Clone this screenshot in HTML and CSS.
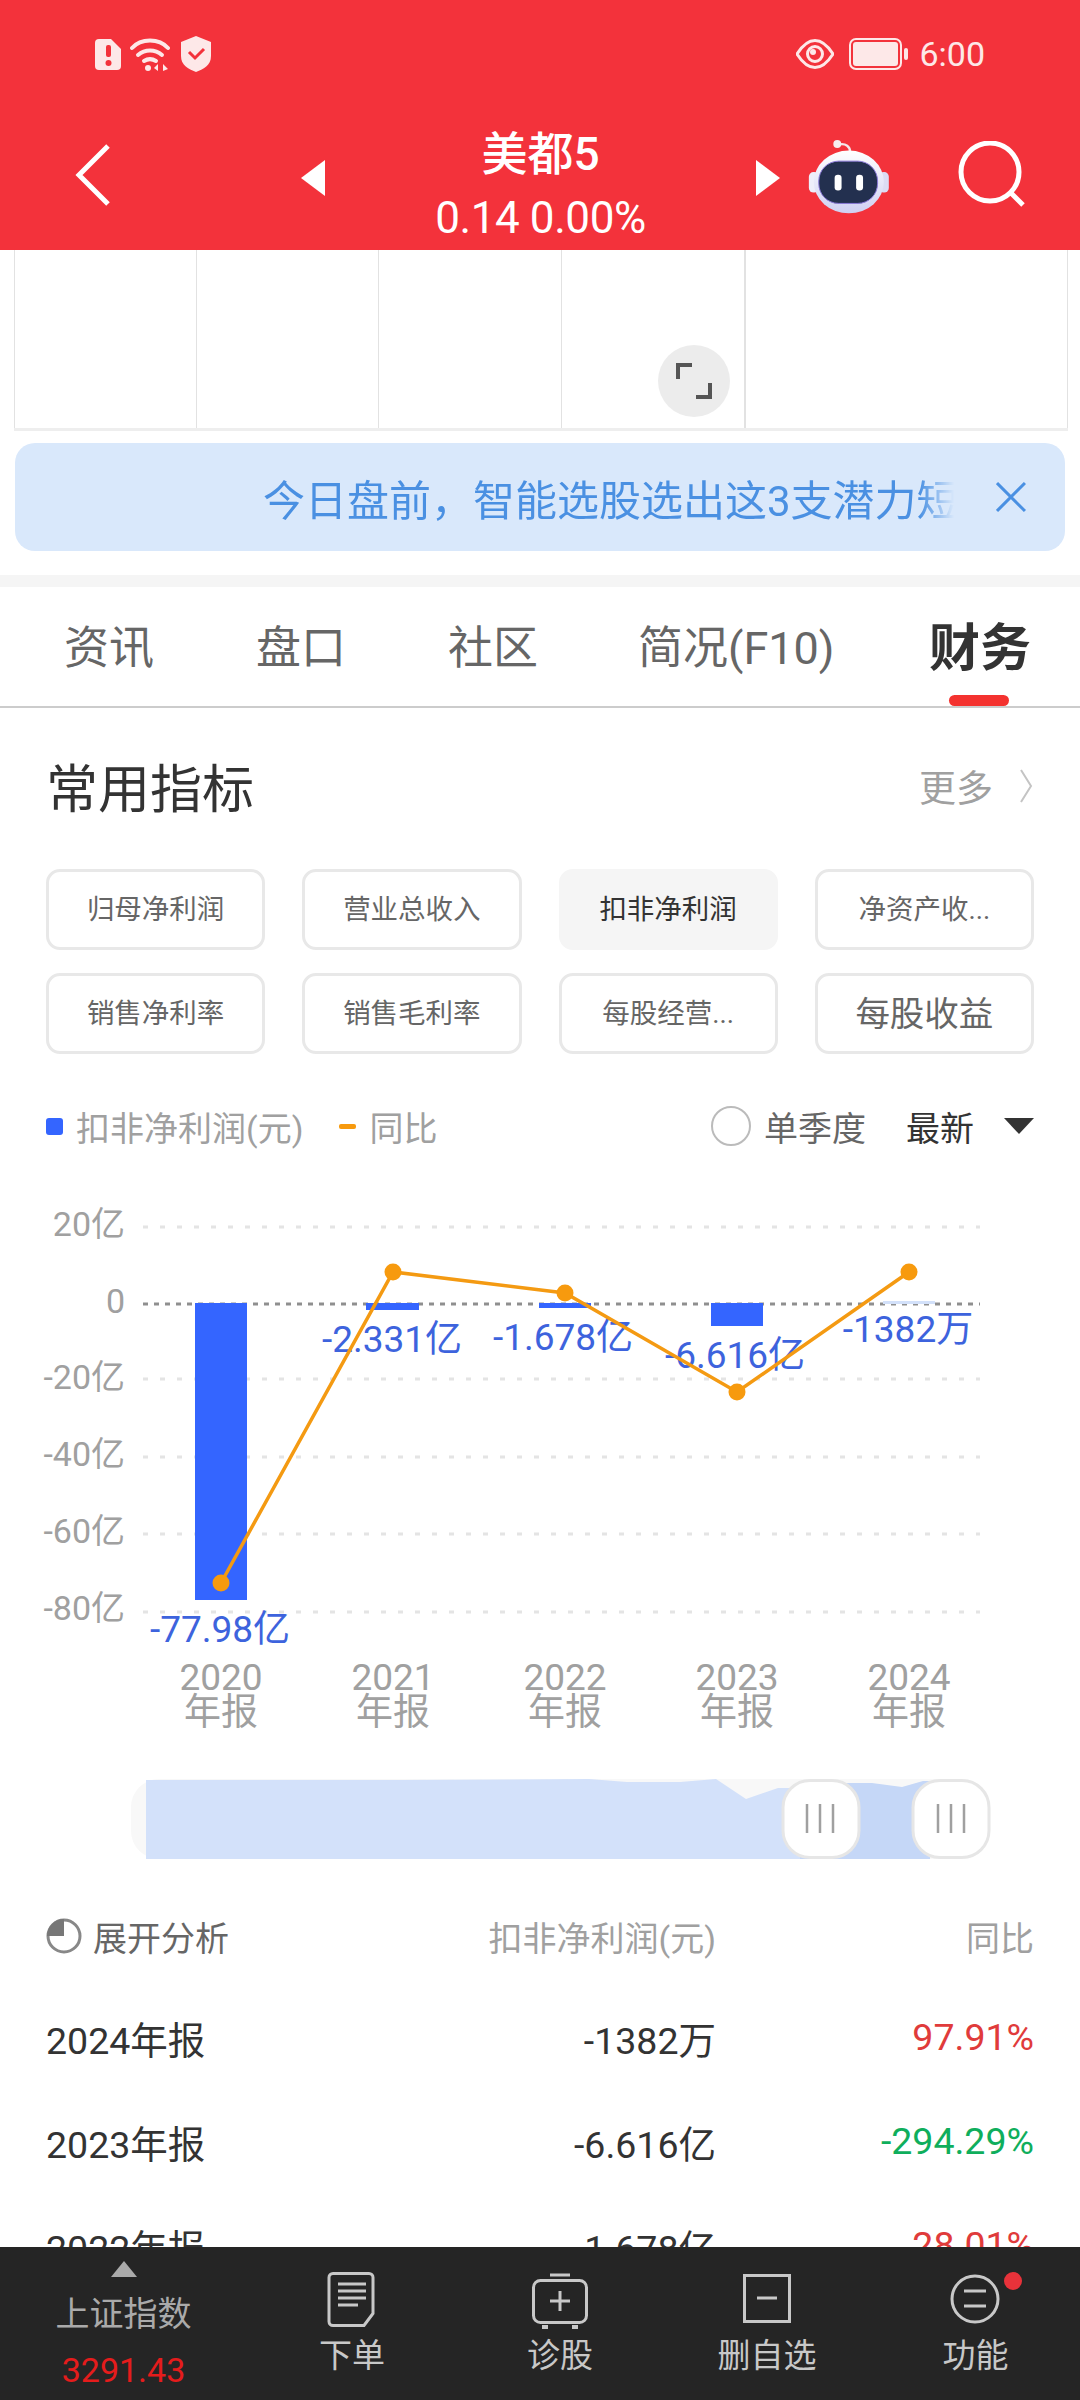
FILE: index.html
```html
<!DOCTYPE html>
<html lang="zh-CN">
<head>
<meta charset="utf-8">
<title>美都5</title>
<link rel="stylesheet" href="styles.css">
</head>
<body>
<div class="phone">
  <header class="header">
    <div class="status">
      <div class="status-left">
        <svg class="ic-sim" viewBox="0 0 26 31"><path d="M4 0h12l10 10v17a4 4 0 0 1-4 4H4a4 4 0 0 1-4-4V4a4 4 0 0 1 4-4z" fill="#fde8e8"/><rect x="11" y="6" width="5" height="12" rx="2" fill="#f3323b"/><circle cx="13.500" cy="24" r="3" fill="#f3323b"/></svg>
        <svg class="ic-wifi" viewBox="0 0 40 34"><g fill="none" stroke="#fde8e8" stroke-width="4" stroke-linecap="round"><path d="M2 11C11 1 29 1 38 11"/><path d="M8 18c7-6 17-6 24 0"/><path d="M14 24c4-2.500 8-2.500 12 0"/></g><circle cx="18" cy="31" r="3" fill="#fde8e8"/><path d="M24 31l4-4v7zM33 27l5 5-5 2z" fill="#fde8e8"/></svg>
        <svg class="ic-shield" viewBox="0 0 30 36"><path d="M15 0l15 6v14c0 9-7 13-15 16C7 33 0 29 0 20V6z" fill="#fde8e8"/><path d="M8 16l6 6 9-9" fill="none" stroke="#f3323b" stroke-width="3"/></svg>
      </div>
      <div class="status-right">
        <svg class="ic-eye" viewBox="0 0 38 30"><path d="M1 15C8 4 14 1.500 19 1.500S30 4 37 15c-7 11-13 13.500-18 13.500S8 26 1 15z" fill="none" stroke="#fde8e8" stroke-width="3"/><circle cx="19" cy="15" r="7.500" fill="none" stroke="#fde8e8" stroke-width="3"/><circle cx="17" cy="13" r="3" fill="#fde8e8"/></svg>
        <svg class="ic-batt" viewBox="0 0 60 32"><rect x="1" y="1" width="51" height="30" rx="6" fill="none" stroke="#fde8e8" stroke-width="2"/><rect x="4" y="4" width="45" height="24" rx="3" fill="#fde8e8"/><rect x="55" y="10" width="4" height="12" rx="2" fill="#fde8e8"/></svg>
        <span class="clock">6:00</span>
      </div>
    </div>
    <div class="nav">
      <svg class="ic-back" viewBox="0 0 36 62"><path d="M33 2L4 31l29 29" fill="none" stroke="#fff" stroke-width="5"/></svg>
      <svg class="ic-prev" viewBox="0 0 24 36"><path d="M24 0v36L0 18z" fill="#fff"/></svg>
      <div class="stock">
        <div class="stock-name">美都5</div>
        <div class="stock-price">0.14 0.00%</div>
      </div>
      <svg class="ic-next" viewBox="0 0 24 36"><path d="M0 0v36l24-18z" fill="#fff"/></svg>
      <svg class="ic-robot" viewBox="80 55 250 230">
        <defs><linearGradient id="robotHead" x1="0" y1="0" x2="0" y2="1"><stop offset="0" stop-color="#ffffff"/><stop offset="1" stop-color="#cfd0f2"/></linearGradient></defs>
        <path d="M207 95c0-18-14-26-30-24" fill="none" stroke="#f4e6ea" stroke-width="7"/>
        <circle cx="168" cy="70" r="12" fill="#f7eef0"/>
        <rect x="82" y="155" width="30" height="62" rx="14" fill="#eeeefa"/>
        <rect x="294" y="155" width="30" height="62" rx="14" fill="#dcdcf4"/>
        <ellipse cx="203" cy="185" rx="106" ry="95" fill="url(#robotHead)"/>
        <rect x="112" y="122" width="178" height="128" rx="60" fill="#23304f" stroke="#8a78d8" stroke-width="3"/>
        <rect x="160" y="163" width="21" height="48" rx="10" fill="#fff"/>
        <rect x="225" y="163" width="21" height="48" rx="10" fill="#fff"/>
      </svg>
      <svg class="ic-search" viewBox="0 0 70 68"><circle cx="32" cy="31" r="29" fill="none" stroke="#fff" stroke-width="5"/><path d="M52 51l13 13" fill="none" stroke="#fff" stroke-width="5"/></svg>
    </div>
  </header>

  <main class="scroll">
    <div class="kline">
      <div class="kline-cell"></div>
      <div class="kline-cell"></div>
      <div class="kline-cell"></div>
      <div class="kline-cell"></div>
      <div class="kline-cell"></div>
      <button class="expand" type="button" aria-label="全屏">
        <svg viewBox="0 0 36 36"><path d="M2 16V2h14M34 20v14H20" fill="none" stroke="#555" stroke-width="4"/></svg>
      </button>
    </div>

    <div class="banner">
      <div class="banner-text">今日盘前，智能选股选出这3支潜力短</div>
      <svg class="banner-close" viewBox="0 0 30 30"><path d="M1 1l28 28M29 1L1 29" fill="none" stroke="#4a90e2" stroke-width="3"/></svg>
    </div>

    <div class="band"></div>

    <nav class="tabs">
      <span class="tab">资讯</span>
      <span class="tab">盘口</span>
      <span class="tab">社区</span>
      <span class="tab">简况(F10)</span>
      <span class="tab tab-active">财务</span>
    </nav>

    <section class="metrics">
      <div class="metrics-head">
        <h2 class="metrics-title">常用指标</h2>
        <div class="more">更多<svg class="more-arrow" viewBox="0 0 14 34"><path d="M2 1l10 16L2 33" fill="none" stroke="#c4c4c4" stroke-width="2"/></svg></div>
      </div>
      <div class="chips">
        <div class="chip">归母净利润</div>
        <div class="chip">营业总收入</div>
        <div class="chip chip-active">扣非净利润</div>
        <div class="chip">净资产收...</div>
        <div class="chip">销售净利率</div>
        <div class="chip">销售毛利率</div>
        <div class="chip">每股经营...</div>
        <div class="chip chip-large">每股收益</div>
      </div>
      <div class="legend">
        <i class="swatch-bar"></i><span class="legend-text">扣非净利润(元)</span>
        <i class="swatch-line"></i><span class="legend-text">同比</span>
        <i class="radio"></i><span class="legend-quarter">单季度</span>
        <span class="legend-latest">最新</span>
        <svg class="legend-caret" viewBox="0 0 30 16"><path d="M0 0h30L15 16z" fill="#333"/></svg>
      </div>
    </section>

    <svg class="chart" viewBox="0 1190 1080 570" width="1080" height="570">
      <g class="grid-line">
        <path d="M143 1226H980M143 1378H980M143 1456H980M143 1533H980M143 1611H980"/>
      </g>
      <path class="zero-line" d="M143 1303H980"/>
      <g class="axis-y">
        <text x="125" y="1235">20亿</text>
        <text x="125" y="1312">0</text>
        <text x="125" y="1388">-20亿</text>
        <text x="125" y="1465">-40亿</text>
        <text x="125" y="1542">-60亿</text>
        <text x="125" y="1619">-80亿</text>
      </g>
      <rect class="bar" x="195" y="1302" width="52" height="297"/>
      <rect class="bar" x="366" y="1302" width="53" height="7"/>
      <rect class="bar" x="539" y="1302" width="52" height="5"/>
      <rect class="bar" x="711" y="1302" width="52" height="23"/>
      <rect class="bar-faint" x="883" y="1300" width="52" height="3"/>
      <g class="bar-label">
        <text x="392" y="1351">-2.331亿</text>
        <text x="563" y="1349">-1.678亿</text>
        <text x="735" y="1367">-6.616亿</text>
        <text x="908" y="1341">-1382万</text>
        <text x="220" y="1641">-77.98亿</text>
      </g>
      <polyline class="trend" points="221,1582 393,1271 565,1292 737,1391 909,1271"/>
      <g class="trend-dot">
        <circle cx="221" cy="1582" r="8.500"/>
        <circle cx="393" cy="1271" r="8.500"/>
        <circle cx="565" cy="1292" r="8.500"/>
        <circle cx="737" cy="1391" r="8.500"/>
        <circle cx="909" cy="1271" r="8.500"/>
      </g>
      <g class="axis-x">
        <text x="221" y="1689">2020</text><text x="221" y="1724">年报</text>
        <text x="393" y="1689">2021</text><text x="393" y="1724">年报</text>
        <text x="565" y="1689">2022</text><text x="565" y="1724">年报</text>
        <text x="737" y="1689">2023</text><text x="737" y="1724">年报</text>
        <text x="909" y="1689">2024</text><text x="909" y="1724">年报</text>
      </g>
    </svg>

    <svg class="slider" viewBox="0 1760 1080 120" width="1080" height="120">
      <rect x="131" y="1778" width="859" height="80" rx="28" fill="#f8f8f8"/>
      <path d="M146 1779L400 1779 589 1778 627 1781 680 1781 716 1778 746 1798 778 1787 800 1787 800 1858H146z" fill="#d3e1fa"/>
      <path d="M800 1782H846L872 1782 902 1786 923 1780 930 1780V1858H800z" fill="#c5d7f7"/>
      <rect x="783" y="1779.500" width="76" height="77" rx="27" fill="#fff" stroke="#e6e6e6" stroke-width="3"/>
      <rect x="913" y="1779.500" width="76" height="77" rx="27" fill="#fff" stroke="#e6e6e6" stroke-width="3"/>
      <path d="M807 1803v29M820 1803v29M833 1803v29M938 1803v29M951 1803v29M964 1803v29" stroke="#a0a0a0" stroke-width="2.500"/>
    </svg>

    <section class="table">
      <div class="table-row table-head">
        <div class="cell-name">
          <svg class="ic-pie" viewBox="0 0 36 36"><circle cx="18" cy="18" r="16" fill="none" stroke="#888" stroke-width="3"/><path d="M18 1v17H1A17 17 0 0 1 18 1z" fill="#777"/></svg>展开分析
        </div>
        <div class="cell-value">扣非净利润(元)</div>
        <div class="cell-rate">同比</div>
      </div>
      <div class="table-row">
        <div class="cell-name">2024年报</div>
        <div class="cell-value">-1382万</div>
        <div class="cell-rate up">97.91%</div>
      </div>
      <div class="table-row">
        <div class="cell-name">2023年报</div>
        <div class="cell-value">-6.616亿</div>
        <div class="cell-rate down">-294.29%</div>
      </div>
      <div class="table-row">
        <div class="cell-name">2022年报</div>
        <div class="cell-value">-1.678亿</div>
        <div class="cell-rate up">28.01%</div>
      </div>
    </section>
  </main>

  <footer class="bottom">
    <div class="index">
      <svg class="index-caret" viewBox="0 0 26 16"><path d="M13 0l13 16H0z" fill="#aaa"/></svg>
      <div class="index-name">上证指数</div>
      <div class="index-value">3291.43</div>
    </div>
    <div class="action">
      <svg class="action-icon" viewBox="0 0 60 60"><g fill="none" stroke="#c8c8c8" stroke-width="3"><path d="M11 4.500h36a4 4 0 0 1 4 4v36l-9 12H11a4 4 0 0 1-4-4V8.500a4 4 0 0 1 4-4z"/><path d="M16 15h28M16 22h28M16 29h28M16 36h20"/></g></svg>
      <div class="action-label">下单</div>
    </div>
    <div class="action">
      <svg class="action-icon" viewBox="0 0 60 60"><g fill="none" stroke="#c8c8c8" stroke-width="3"><path d="M20 6h20"/><rect x="3.500" y="11.500" width="53" height="42" rx="7"/><path d="M30 22v20M20 32h20"/><path d="M12 58h6M42 58h6" stroke-width="4"/></g></svg>
      <div class="action-label">诊股</div>
    </div>
    <div class="action">
      <svg class="action-icon" viewBox="0 0 60 60"><g fill="none" stroke="#c8c8c8" stroke-width="3"><rect x="7.500" y="6.500" width="45" height="46"/><path d="M20 29h20"/></g></svg>
      <div class="action-label">删自选</div>
    </div>
    <div class="action">
      <svg class="action-icon action-icon-wide" viewBox="0 0 90 60"><g fill="none" stroke="#c8c8c8" stroke-width="3"><circle cx="29" cy="30" r="23"/><path d="M18 22h22M18 37h22"/></g><circle cx="67" cy="12" r="9" fill="#e8323a"/></svg>
      <div class="action-label">功能</div>
    </div>
  </footer>
</div>
</body>
</html>
```

FILE: styles.css
```css
* { box-sizing: border-box; }
html, body { margin: 0; padding: 0; background: #fff; }
body, button, text { font-family: Roboto, "Noto Sans CJK SC", sans-serif; }
.phone { width: 1080px; height: 2400px; display: flex; flex-direction: column; overflow: hidden; position: relative; }

/* header */
.header { height: 250px; background: #f3323b; color: #fff; flex: none; }
.status { height: 108px; display: flex; justify-content: space-between; align-items: center; padding: 0 95px 0 95px; }
.status-left, .status-right { display: flex; align-items: center; }
.ic-sim { width: 26px; height: 31px; }
.ic-wifi { width: 40px; height: 34px; margin-left: 9px; }
.ic-shield { width: 30px; height: 36px; margin-left: 11px; }
.ic-eye { width: 38px; height: 30px; }
.ic-batt { width: 62px; height: 32px; margin-left: 14px; }
.clock { font-size: 34px; margin-left: 9px; color: #fde8e8; }
.nav { height: 142px; display: flex; align-items: center; padding-left: 75px; }
.ic-back { width: 36px; height: 62px; margin-top: -8px; }
.ic-prev { width: 24px; height: 36px; margin-left: 190px; margin-top: -2px; }
.stock { width: 431px; text-align: center; margin-top: 14px; }
.stock-name { font-size: 46px; line-height: 56px; font-weight: 500; }
.stock-price { font-size: 44px; line-height: 56px; margin-top: 8px; letter-spacing: -0.4px; }
.ic-next { width: 24px; height: 36px; margin-top: -2px; }
.ic-robot { width: 83px; height: 76px; margin-left: 28px; margin-top: -4px; }
.ic-search { width: 70px; height: 68px; margin-left: 67px; margin-top: -8px; }

/* scroll */
.scroll { flex: 1; overflow: hidden; min-height: 0; }
.kline { position: relative; height: 181px; margin: 0 12px 0 14px; display: grid; grid-template-columns: 182px 182px 183px 183px 1fr; border-bottom: 3px solid #eee; }
.kline-cell { border-left: 1px solid #e2e2e2; }
.kline-cell:last-of-type { border-right: 1px solid #e2e2e2; border-left: 2px solid #e2e2e2; }
.expand { position: absolute; left: 644px; top: 95px; width: 72px; height: 72px; border-radius: 50%; border: 0; background: #ececec; padding: 0; display: flex; align-items: center; justify-content: center; }
.expand svg { width: 36px; height: 36px; }

.banner { height: 108px; margin: 12px 15px 0; background: #d9e8fb; border-radius: 20px; display: flex; align-items: center; padding: 0 39px 0 248px; }
.banner-text { width: 692px; overflow: hidden; white-space: nowrap; font-size: 42px; color: #4a90e2; -webkit-mask-image: linear-gradient(90deg, #000 95%, transparent); mask-image: linear-gradient(90deg, #000 95%, transparent); }
.banner-close { width: 30px; height: 30px; margin-left: 42px; }

.band { height: 12px; margin-top: 24px; background: #f5f5f5; }

.tabs { height: 121px; display: grid; grid-template-columns: 192px 192px 190px 291px 100px; padding: 4px 0 0 64px; align-items: center; border-bottom: 2px solid #ccc; }
.tab { font-size: 45px; color: #666; line-height: 60px; white-space: nowrap; }
.tab-active { font-size: 51px; font-weight: 700; color: #333; position: relative; }
.tab-active::after { content: ""; position: absolute; left: 20px; bottom: -27px; width: 60px; height: 11px; background: #f4322f; border-radius: 6px; }

.metrics { padding: 0 46px; }
.metrics-head { height: 155px; margin-bottom: 6px; display: flex; justify-content: space-between; align-items: center; }
.metrics-title { margin: 0; font-size: 52px; font-weight: 400; color: #333; }
.more { display: flex; align-items: center; font-size: 37px; color: #a0a0a0; margin-right: 1px; }
.more-arrow { width: 14px; height: 34px; margin-left: 26px; }
.chips { display: grid; grid-template-columns: repeat(4, 1fr); grid-auto-rows: 81px; gap: 23px 37px; }
.chip { border: 3px solid #e8e8e8; border-radius: 14px; display: flex; align-items: center; justify-content: center; font-size: 27.5px; color: #666; padding-bottom: 6px; white-space: nowrap; }
.chip-active { background: #f5f5f5; border-color: #f5f5f5; color: #333; }
.chip-large { font-size: 34.5px; }
.legend { height: 40px; margin-top: 52px; display: flex; align-items: center; font-size: 34px; color: #a0a0a0; white-space: nowrap; }
.swatch-bar { width: 17px; height: 17px; border-radius: 3px; background: #3465ff; flex: none; }
.legend-text { margin-left: 13px; }
.swatch-line { width: 17px; height: 5px; border-radius: 2px; background: #f79a0e; margin-left: 36px; flex: none; }
.radio { width: 40px; height: 40px; border: 2px solid #bbb; border-radius: 50%; margin-left: auto; flex: none; }
.legend-quarter { color: #666; margin-left: 13px; }
.legend-latest { color: #333; margin-left: 40px; }
.legend-caret { width: 30px; height: 16px; margin-left: 30px; flex: none; }

/* chart */
.chart { display: block; margin-top: 45px; }
.grid-line path { stroke: #e4e4e4; stroke-width: 3; stroke-dasharray: 5 12; fill: none; }
.zero-line { stroke: #8f8f8f; stroke-width: 3; stroke-dasharray: 5 6; fill: none; }
.axis-y text { font-size: 34px; fill: #a0a0a0; text-anchor: end; }
.bar { fill: #3465ff; }
.bar-faint { fill: #d3e1fa; }
.bar-label text { font-size: 37px; fill: #3d63dd; text-anchor: middle; }
.trend { fill: none; stroke: #f49a12; stroke-width: 3.5; }
.trend-dot circle { fill: #f79a0e; }
.axis-x text { font-size: 37px; fill: #a0a0a0; text-anchor: middle; }
.slider { display: block; }

/* table */
.table { padding: 0 46px; margin-top: 6px; }
.table-row { height: 104px; display: grid; grid-template-columns: 1fr 340px 318px; align-items: center; font-size: 37.5px; color: #333; white-space: nowrap; }
.table-head { height: 98px; font-size: 34px; color: #a0a0a0; }
.table-head .cell-name { color: #666; display: flex; align-items: center; }
.ic-pie { width: 36px; height: 36px; margin-right: 11px; }
.cell-value, .cell-rate { text-align: right; }
.up { color: #e03b3b; }
.down { color: #0fae5c; }

/* bottom */
.bottom { height: 153px; flex: none; background: #252525; display: grid; grid-template-columns: 247px 210px 206px 208px 209px; color: #c8c8c8; }
.index { display: flex; flex-direction: column; align-items: center; padding-top: 14px; }
.index-caret { width: 26px; height: 16px; }
.index-name { font-size: 34px; line-height: 42px; margin-top: 16px; color: #aaa; }
.index-value { font-size: 34px; line-height: 42px; margin-top: 14px; color: #e51c1c; }
.action { display: flex; flex-direction: column; align-items: center; padding-top: 22px; }
.action-icon { width: 60px; height: 60px; display: block; }
.action-icon-wide { width: 90px; margin-left: 31px; }
.action-label { font-size: 33px; line-height: 44px; margin-top: 5px; }
```
